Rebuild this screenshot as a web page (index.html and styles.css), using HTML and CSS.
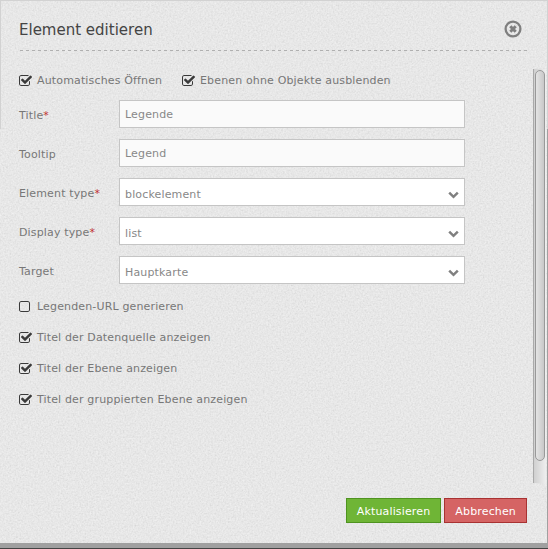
FILE: index.html
```html
<!DOCTYPE html>
<html lang="de">
<head>
<meta charset="utf-8">
<title>Element editieren</title>
<link rel="stylesheet" href="styles.css">
</head>
<body>
<svg class="defs" width="0" height="0" aria-hidden="true">
  <symbol id="checked" viewBox="64 0 1792 1792"><path d="M1472 930v318q0 119-84.5 203.5t-203.5 84.5h-832q-119 0-203.500-84.5t-84.5-203.5v-832q0-119 84.5-203.500t203.5-84.5h832q63 0 117 25 15 7 18 23 3 17-9 29l-49 49q-10 10-23 10-3 0-9-2-23-6-45-6h-832q-66 0-113 47t-47 113v832q0 66 47 113t113 47h832q66 0 113-47t47-113v-254q0-13 9-22l64-64q10-10 23-10 6 0 12 3 20 8 20 29zm231-489l-814 814q-24 24-57 24t-57-24l-430-430q-24-24-24-57t24-57l110-110q24-24 57-24t57 24l263 263 647-647q24-24 57-24t57 24l110 110q24 24 24 57t-24 57z"/></symbol>
  <symbol id="unchecked" viewBox="192 0 1792 1792"><path d="M1312 256h-832q-66 0-113 47t-47 113v832q0 66 47 113t113 47h832q66 0 113-47t47-113v-832q0-66-47-113t-113-47zm288 160v832q0 119-84.500 203.500t-203.500 84.500h-832q-119 0-203.500-84.500t-84.500-203.500v-832q0-119 84.500-203.500t203.500-84.500h832q119 0 203.500 84.500t84.500 203.500z"/></symbol>
  <symbol id="chevron" viewBox="0 0 11 8"><path d="M1.200 1.600l4.300 4.200 4.300-4.200" fill="none" stroke="#808080" stroke-width="2.500"/></symbol>
</svg>
<div class="popup">
  <svg class="texture" aria-hidden="true">
    <filter id="grain" x="0" y="0" width="100%" height="100%">
      <feTurbulence type="fractalNoise" baseFrequency="0.6" numOctaves="2" seed="4"/>
      <feColorMatrix values="0.14 0.08 0 0 0.745  0.14 0.08 0 0 0.745  0.14 0.08 0 0 0.745  0 0 0 0 1" color-interpolation-filters="sRGB"/>
    </filter>
    <rect width="100%" height="100%" filter="url(#grain)"/>
  </svg>
  <header class="head">
    <h1>Element editieren</h1>
    <svg class="close" viewBox="0 0 18 18"><circle cx="9" cy="9" r="7.400" fill="none" stroke="#7f7f7f" stroke-width="2.300"/><path d="M6.300 6.300l5.400 5.400M11.700 6.300l-5.400 5.400" stroke="#7f7f7f" stroke-width="3"/></svg>
  </header>
  <svg class="rule" aria-hidden="true"><path d="M1 .5H508" stroke="#b0b0b0" stroke-dasharray="3 3"/></svg>
  <div class="content">
    <form class="form">
      <div class="checks">
        <label class="check first"><svg><use href="#checked"/></svg>Automatisches Öffnen</label>
        <label class="check"><svg><use href="#checked"/></svg>Ebenen ohne Objekte ausblenden</label>
      </div>
      <div class="row"><span class="label">Title<b>*</b></span><div class="field">Legende</div></div>
      <div class="row"><span class="label">Tooltip</span><div class="field">Legend</div></div>
      <div class="row"><span class="label">Element type<b>*</b></span><div class="field select">blockelement<svg><use href="#chevron"/></svg></div></div>
      <div class="row"><span class="label">Display type<b>*</b></span><div class="field select">list<svg><use href="#chevron"/></svg></div></div>
      <div class="row"><span class="label">Target</span><div class="field select">Hauptkarte<svg><use href="#chevron"/></svg></div></div>
      <div class="options">
        <label class="check"><svg><use href="#unchecked"/></svg>Legenden-URL generieren</label>
        <label class="check"><svg><use href="#checked"/></svg>Titel der Datenquelle anzeigen</label>
        <label class="check"><svg><use href="#checked"/></svg>Titel der Ebene anzeigen</label>
        <label class="check"><svg><use href="#checked"/></svg>Titel der gruppierten Ebene anzeigen</label>
      </div>
    </form>
    <div class="scrollbar"><div class="thumb"></div></div>
  </div>
  <footer class="buttons">
    <div class="button ok">Aktualisieren</div>
    <div class="button cancel">Abbrechen</div>
  </footer>
</div>
</body>
</html>
```
FILE: styles.css
```css
* { box-sizing: border-box; }
body {
  margin: 0;
  height: 549px;
  overflow: hidden;
  background: #444;
  font: 11px/16px "DejaVu Sans", sans-serif;
  letter-spacing: 0.15px;
  color: #777;
}
.defs { position: absolute; }
.popup {
  position: relative;
  height: 548px;
  border-right: 1px solid #a0a0a0;
  border-bottom: 5px solid #a0a0a0;
  background: #e6e6e6;
  display: flex;
  flex-direction: column;
}
.popup::after {
  content: "";
  position: absolute;
  top: 0;
  left: 0;
  width: 546px;
  height: 128px;
  border: 1px solid #d2d2d2;
  border-bottom: 0;
}
.texture {
  position: absolute;
  inset: 0;
  width: 100%;
  height: 100%;
  z-index: 0;
}
.head, .rule, .content, .buttons { position: relative; flex: none; }
.content { z-index: 1; }
.head {
  display: flex;
  align-items: center;
  justify-content: space-between;
  height: 50px;
  padding: 8px 25px 0 19px;
}
h1 {
  margin: 2px 0 0;
  font-size: 15px;
  line-height: 22px;
  font-weight: 400;
  letter-spacing: 0;
  color: #444;
}
.close { width: 18px; height: 18px; }
.rule { display: block; width: 508px; height: 1px; margin-left: 19px; }
.content {
  display: flex;
  justify-content: space-between;
  height: 414px;
  margin-top: 18px;
  padding-right: 1px;
}
.form { width: 465px; padding: 2px 0 0 19px; }
.checks { display: flex; height: 29px; }
.check { display: flex; align-items: center; height: 18px; padding-top: 2px; white-space: nowrap; }
.check svg { width: 14px; height: 14px; margin: -1px 4px 0 0; fill: #3a3a3a; }
.first { width: 163px; }
.row { display: flex; height: 28px; margin-bottom: 11px; }
.label { width: 100px; padding-top: 8px; }
.label b { font-weight: 400; color: #c03030; }
.field {
  width: 346px;
  padding: 6px 5px;
  border: 1px solid #c5c5c5;
  background: #fafafa;
  color: #888;
}
.select {
  display: flex;
  justify-content: space-between;
  padding-top: 8px;
  background: #fff;
}
.select svg { width: 11px; height: 8px; margin-top: 4px; }
.options { display: flex; flex-direction: column; gap: 13px; padding-top: 2px; }
.scrollbar {
  width: 13px;
  padding: 1px 0 1px 1px;
  border-left: 1px solid #aaa;
  background: linear-gradient(90deg, #d0d0d0, #eee);
}
.thumb {
  width: 10px;
  height: 391px;
  border: 1px solid #999;
  border-radius: 5px;
  background: linear-gradient(90deg, #e4e4e4, #c8c8c8);
}
.buttons {
  display: flex;
  justify-content: flex-end;
  gap: 3px;
  padding: 15px 20px 0 0;
}
.button {
  height: 25px;
  padding: 5px 10px 3px;
  border: 1px solid #4f9320;
  background: #6fb536;
  color: #fff;
}
.cancel { border-color: #a83232; background: #d56464; }
```
